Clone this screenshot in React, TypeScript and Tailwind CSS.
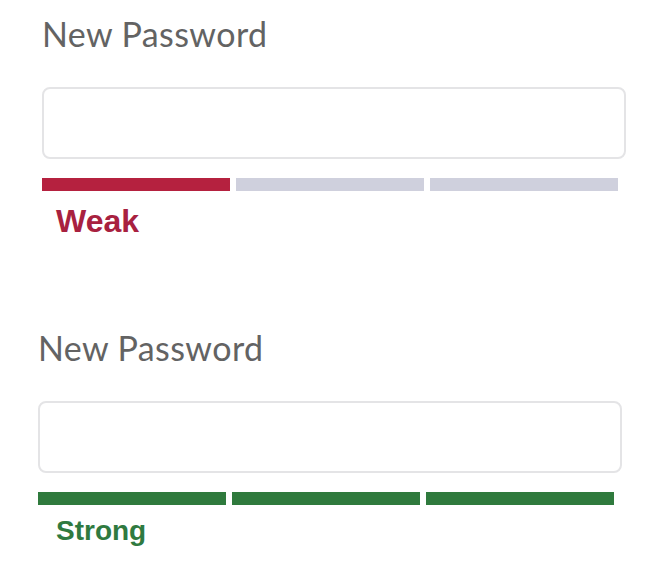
import React from 'react'

type Strength = {
  label: string
  filled: number
  barColor: string
  textClass: string
}

const weak: Strength = {
  label: 'Weak',
  filled: 1,
  barColor: 'bg-[#b5213f]',
  textClass: 'ml-[14px] mt-[14px] text-[32px] leading-[32px] text-[#a8213f]',
}

const strong: Strength = {
  label: 'Strong',
  filled: 3,
  barColor: 'bg-[#2f7a3d]',
  textClass: 'ml-[18px] mt-[12px] text-[28px] leading-[27px] text-[#2f7a40]',
}

function PasswordField({ strength, className }: { strength: Strength; className: string }) {
  return (
    <div className={`flex flex-col w-[584px] ${className}`}>
      <label className="font-['Lato',sans-serif] font-normal text-[34px] leading-[34px] text-[#636363] tracking-[0.4px]">
        New Password
      </label>
      <input
        type="password"
        className="mt-[36px] h-[72px] w-full rounded-lg border-2 border-[#e4e4e6] bg-white outline-none"
      />
      <div className="mt-[19px] flex w-[576px] gap-[6px]">
        {[0, 1, 2].map((i) => (
          <div
            key={i}
            className={`h-[13px] flex-1 ${i < strength.filled ? strength.barColor : 'bg-[#cfd0dd]'}`}
          />
        ))}
      </div>
      <span className={`font-['Liberation_Sans',Arial,sans-serif] font-bold ${strength.textClass}`}>
        {strength.label}
      </span>
    </div>
  )
}

export default function App() {
  return (
    <div className="min-h-[583px] w-[660px] bg-white pt-[17px]">
      <PasswordField strength={weak} className="ml-[42px]" />
      <PasswordField strength={strong} className="ml-[38px] mt-[94px]" />
    </div>
  )
}
